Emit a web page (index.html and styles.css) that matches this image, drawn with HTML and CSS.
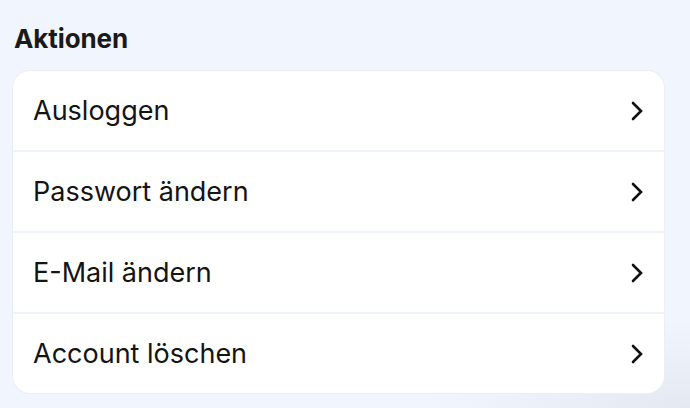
FILE: index.html
```html
<!DOCTYPE html>
<html lang="de">
<head>
<meta charset="utf-8">
<title>Aktionen</title>
<link rel="stylesheet" href="styles.css">
</head>
<body>
<main class="page">
  <h2 class="section-title">Aktionen</h2>
  <ul class="action-list">
    <li class="action-row">
      <span class="action-label">Ausloggen</span>
      <svg class="chevron" viewBox="0 0 12 20" width="12" height="20" aria-hidden="true"><path d="M2 2 L10 10 L2 18"/></svg>
    </li>
    <li class="action-row">
      <span class="action-label">Passwort ändern</span>
      <svg class="chevron" viewBox="0 0 12 20" width="12" height="20" aria-hidden="true"><path d="M2 2 L10 10 L2 18"/></svg>
    </li>
    <li class="action-row">
      <span class="action-label">E-Mail ändern</span>
      <svg class="chevron" viewBox="0 0 12 20" width="12" height="20" aria-hidden="true"><path d="M2 2 L10 10 L2 18"/></svg>
    </li>
    <li class="action-row">
      <span class="action-label">Account löschen</span>
      <svg class="chevron" viewBox="0 0 12 20" width="12" height="20" aria-hidden="true"><path d="M2 2 L10 10 L2 18"/></svg>
    </li>
  </ul>
</main>
</body>
</html>
```
FILE: styles.css
```css
html, body {
  margin: 0;
  height: 100%;
}
body {
  background: radial-gradient(ellipse 260px 90px at 690px 408px, #e4e8f0 0%, rgba(228,232,240,0) 100%), #f1f5fd;
  font-family: Inter, "DejaVu Sans", sans-serif;
  color: #141414;
  overflow: hidden;
}
.page {
  padding: 23px 26px 0 13px;
}
.section-title {
  margin: 0 0 17px 1px;
  font-size: 26px;
  line-height: 31px;
  font-weight: 700;
  color: #1a1a1a;
  letter-spacing: -0.1px;
}
.action-list {
  list-style: none;
  margin: 0;
  padding: 0;
  background: #fff;
  border-radius: 17px;
  box-shadow: 0 0 0 1px #e9eef7;
  overflow: hidden;
}
.action-row {
  display: flex;
  align-items: center;
  justify-content: space-between;
  height: 79px;
  padding: 0 21px 0 20px;
  border-bottom: 2px solid #eef3fb;
}
.action-row:last-child {
  border-bottom: none;
}
.action-label {
  font-size: 27px;
  font-weight: 400;
  color: #141414;
}
.chevron {
  display: block;
  fill: none;
  stroke: #111;
  stroke-width: 2.6;
  stroke-linecap: round;
  stroke-linejoin: miter;
}
```
